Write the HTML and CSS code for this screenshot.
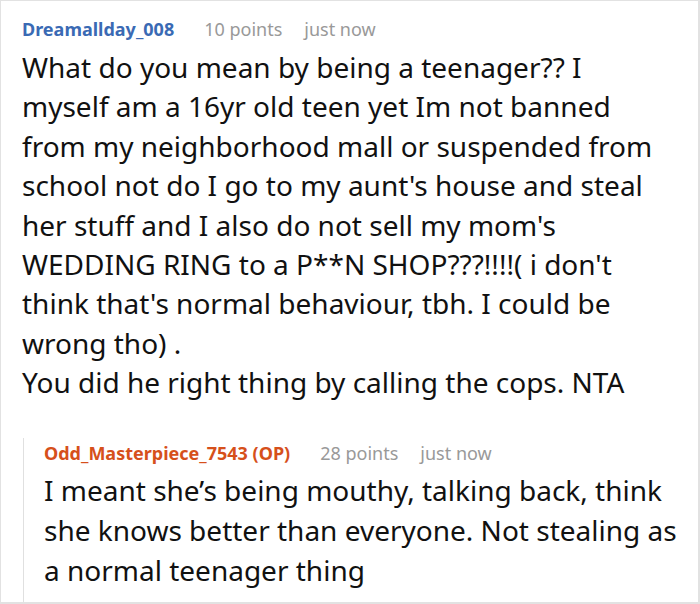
FILE: index.html
```html
<!DOCTYPE html>
<html>
<head>
<meta charset="utf-8">
<link rel="stylesheet" href="styles.css">
</head>
<body>
<div class="frame">
  <div class="comment">
    <div class="meta">
      <span class="author">Dreamallday_008</span>
      <span class="info">10 points</span>
      <span class="info">just now</span>
    </div>
    <p class="text">What do you mean by being a teenager?? I<br>myself am a 16yr old teen yet Im not banned<br>from my neighborhood mall or suspended from<br>school not do I go to my aunt's house and steal<br>her stuff and I also do not sell my mom's<br>WEDDING RING to a P**N SHOP???!!!!( i don't<br>think that's normal behaviour, tbh. I could be<br>wrong tho) .<br>You did he right thing by calling the cops. NTA</p>
  </div>
  <div class="reply">
    <div class="meta">
      <span class="author op">Odd_Masterpiece_7543 (OP)</span>
      <span class="info">28 points</span>
      <span class="info">just now</span>
    </div>
    <p class="text">I meant she’s being mouthy, talking back, think<br>she knows better than everyone. Not stealing as<br>a normal teenager thing</p>
  </div>
</div>
</body>
</html>
```
FILE: styles.css
```css
html, body {
  margin: 0;
  padding: 0;
  background: #fff;
}
.frame {
  box-sizing: border-box;
  width: 700px;
  height: 604px;
  border: 1px solid #e2e2e2;
  border-right-width: 2px;
  border-bottom-width: 2px;
  padding: 13px 6px 0 21px;
  font-family: "Noto Sans", "Open Sans", sans-serif;
  color: #111;
  overflow: hidden;
}
.meta {
  display: flex;
  gap: 22px;
  font-size: 18px;
  line-height: 30px;
  align-items: baseline;
}
.author {
  font-weight: 700;
  color: #3a6ab4;
  margin-right: 8px;
}
.author.op {
  color: #d6501b;
}
.info {
  color: #999;
}
.text {
  margin: 0;
  padding-top: 4px;
  font-size: 28px;
  line-height: 39.4px;
  white-space: nowrap;
}
.reply {
  margin: 43px 0 0 1px;
  border-left: 1px solid #e0e0e0;
  padding-left: 20px;
  padding-bottom: 14px;
}
.reply .meta {
  margin-top: -8px;
}
.reply .text {
  line-height: 40px;
  padding-top: 2px;
}
```
